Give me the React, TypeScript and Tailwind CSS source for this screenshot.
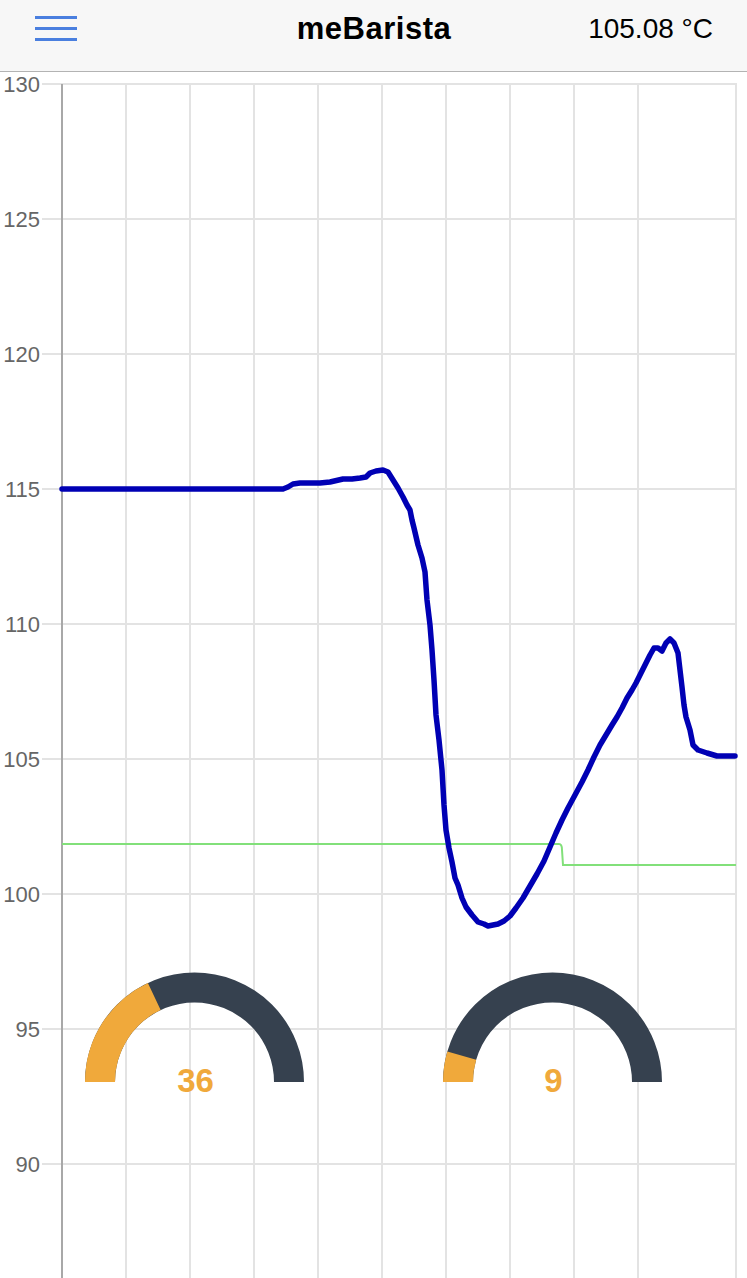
import React from "react";

const bluePts: [number, number][] = [
  [62, 489], [283, 489], [288, 487], [293, 484], [300, 483], [320, 483], [330, 482], [343, 479], [352, 479], [360, 478], [366, 477], [370, 473], [376, 471], [383, 470], [388, 472], [393, 480], [398, 488], [403, 497], [407, 505], [410, 510], [412, 520], [414, 528], [418, 545], [422, 558], [425, 572], [427, 600], [430, 625], [432, 650], [434, 680], [436, 715], [439, 740], [442, 770], [444, 805], [446, 830], [449, 848], [452, 862], [455, 878], [458, 885], [462, 898], [466, 907], [472, 915], [478, 922], [484, 924], [488, 926], [493, 925], [498, 924], [504, 921], [510, 916], [516, 908], [523, 898], [530, 886], [537, 874], [544, 861], [550, 847], [556, 833], [562, 820], [568, 808], [575, 795], [582, 782], [588, 770], [594, 757], [600, 745], [606, 735], [612, 725], [617, 717], [622, 708], [627, 698], [632, 690], [636, 683], [640, 675], [645, 665], [650, 655], [654, 648], [658, 648], [662, 651], [666, 643], [670, 639], [674, 643], [678, 653], [680, 670], [682, 687], [684, 705], [686, 717], [690, 730], [693, 745], [698, 750], [707, 753], [717, 756], [735, 756],
];

const yLabels = [130, 125, 120, 115, 110, 105, 100, 95, 90];

function Gauge({ cx, value }: { cx: number; value: number }) {
  const cy = 1082;
  const r = 94.5;
  const ang = Math.PI - (value / 100) * Math.PI;
  const ex = cx + r * Math.cos(ang);
  const ey = cy - r * Math.sin(ang);
  return (
    <g>
      <path
        d={`M ${cx - r} ${cy} A ${r} ${r} 0 0 1 ${cx + r} ${cy}`}
        fill="none"
        stroke="#36414f"
        strokeWidth={30}
      />
      <path
        d={`M ${cx - r} ${cy} A ${r} ${r} 0 0 1 ${ex} ${ey}`}
        fill="none"
        stroke="#f0a93b"
        strokeWidth={30}
      />
      <text
        x={cx + 1}
        y={1092}
        textAnchor="middle"
        fill="#f0a93b"
        fontSize={33}
        fontWeight={700}
        fontFamily="'Liberation Sans', Arial, sans-serif"
      >
        {value}
      </text>
    </g>
  );
}

export default function App() {
  const d = bluePts.map((p, i) => `${i === 0 ? "M" : "L"}${p[0]},${p[1]}`).join(" ");
  const vx = [62, 126, 190, 254, 318, 382, 446, 510, 574, 638];
  return (
    <div className="w-[747px] h-[1278px] overflow-hidden bg-white" style={{ fontFamily: "'Liberation Sans', Arial, sans-serif" }}>
      <header className="h-[72px] bg-[#f7f7f7] border-b border-[#b3b3b3] grid grid-cols-[1fr_auto_1fr] items-center pb-[14px] pl-[35px] pr-[34px]">
        <div className="flex flex-col gap-[8px] w-[42px]">
          <span className="block h-[3px] bg-[#4a7fdf]" />
          <span className="block h-[3px] bg-[#4a7fdf]" />
          <span className="block h-[3px] bg-[#4a7fdf]" />
        </div>
        <h1 className="text-[31px] font-bold text-black leading-none tracking-[0.5px]">meBarista</h1>
        <div className="justify-self-end text-[28px] text-black leading-none">105.08 °C</div>
      </header>
      <svg width={747} height={1206} viewBox="0 72 747 1206" className="block">
        {yLabels.map((v, i) => {
          const y = 84 + i * 135;
          return (
            <g key={v}>
              <line x1={42} x2={737} y1={y} y2={y} stroke="#e3e3e3" strokeWidth={2} />
              <text
                x={40}
                y={y + 8}
                textAnchor="end"
                fill="#666"
                fontSize={22}
                fontFamily="'Liberation Sans', Arial, sans-serif"
              >
                {v}
              </text>
            </g>
          );
        })}
        {vx.slice(1).map((x) => (
          <line key={x} x1={x} x2={x} y1={84} y2={1280} stroke="#e3e3e3" strokeWidth={2} />
        ))}
        <line x1={736} x2={736} y1={84} y2={1280} stroke="#e3e3e3" strokeWidth={2} />
        <line x1={62} x2={62} y1={84} y2={1280} stroke="#a8a8a8" strokeWidth={2} />
        <path
          d="M62,844 L559,844 Q562,844 562,850 L563,865 L736,865"
          fill="none"
          stroke="#82e07a"
          strokeWidth={2}
        />
        <path d={d} fill="none" stroke="#0000b4" strokeWidth={5.5} strokeLinejoin="round" strokeLinecap="round" />
        <Gauge cx={194.5} value={36} />
        <Gauge cx={552.5} value={9} />
      </svg>
    </div>
  );
}
